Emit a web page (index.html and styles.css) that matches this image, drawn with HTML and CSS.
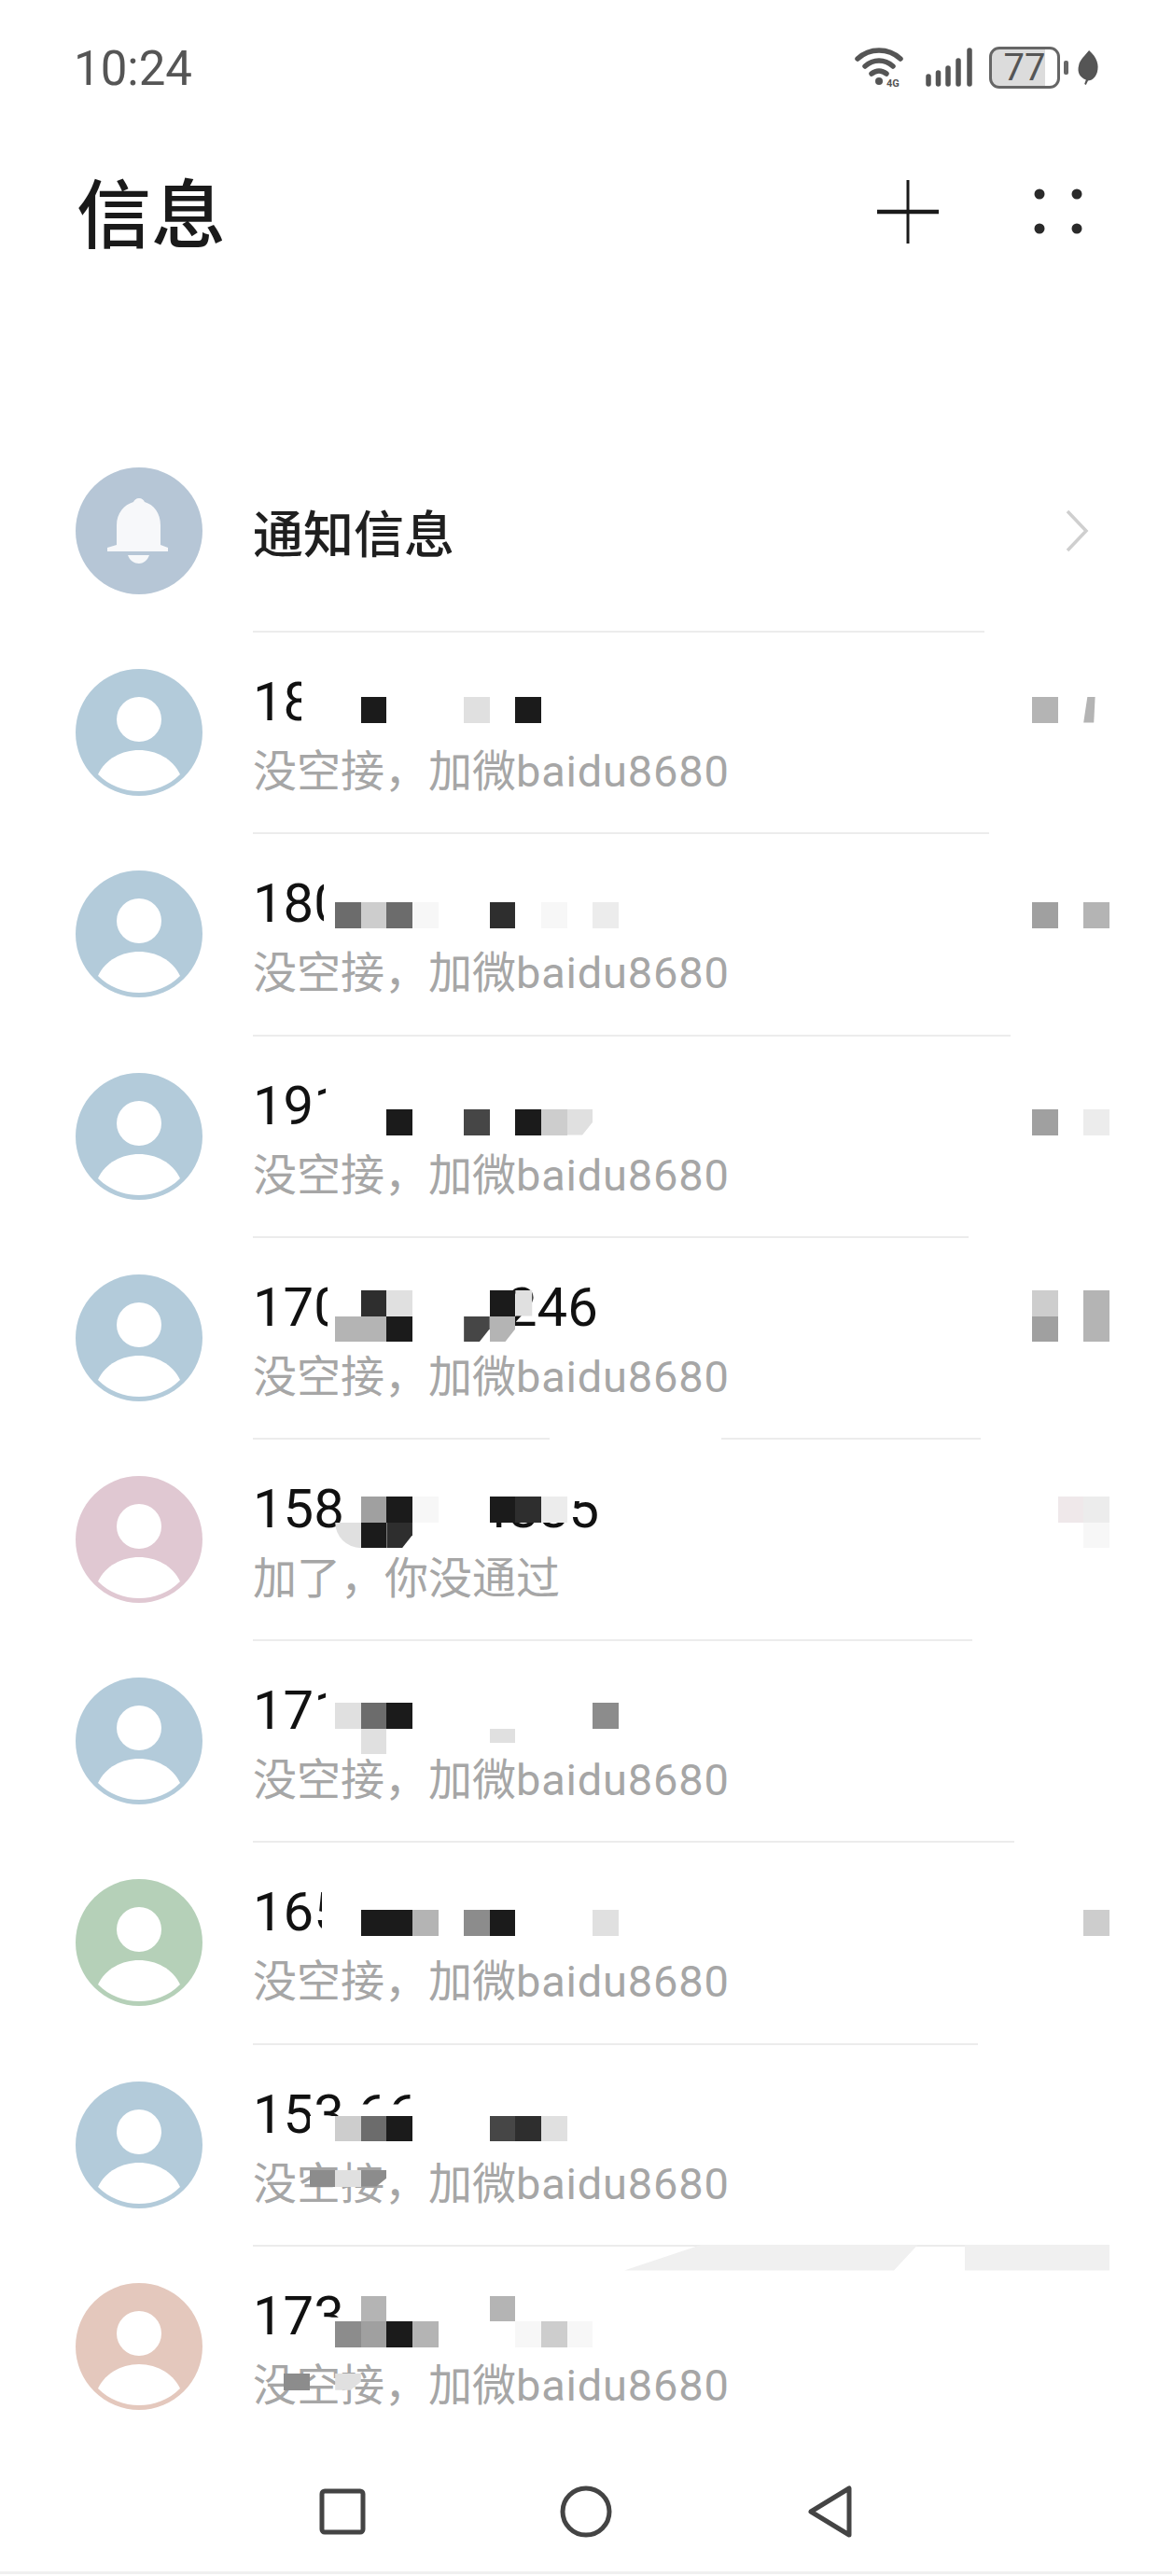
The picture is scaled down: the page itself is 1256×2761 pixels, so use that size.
FILE: index.html
```html
<!DOCTYPE html>
<html lang="zh-CN">
<head>
    <meta charset="UTF-8">
    <meta name="viewport" content="width=device-width, initial-scale=1.0">
    <title>信息</title>
    <link rel="stylesheet" href="styles.css">
</head>
<body>
    <svg class="defs" width="0" height="0">
        <symbol id="person" viewBox="0 0 136 136">
            <circle cx="68" cy="54" r="24" fill="#fff"/>
            <path d="M24 113C32 96 50 87 68 87C86 87 104 96 112 113C100 125 84 131 68 131C52 131 36 125 24 113Z" fill="#fff"/>
        </symbol>
    </svg>

    <div class="status-bar">
        <span class="time">10:24</span>
        <div class="status-icons">
            <svg class="icon-wifi" width="54" height="44" viewBox="0 0 54 44" fill="none" stroke="#555" stroke-width="5.500" stroke-linecap="round">
                <path d="M3 13C16 1 36 1 49 13"/>
                <path d="M11 21C20 13 32 13 41 21"/>
                <path d="M18 29C23 25 29 25 34 29"/>
                <circle cx="26" cy="37" r="4" fill="#555" stroke="none"/>
                <text x="34" y="43" class="wifi-label">4G</text>
            </svg>
            <svg class="icon-signal" width="52" height="42" viewBox="0 0 52 42" stroke="#555" stroke-width="5.500" stroke-linecap="round">
                <path d="M3 31V39M13.500 27V39M24 22V39M35 14V39M47 3V39"/>
            </svg>
            <div class="battery"><span>77</span></div>
            <svg class="icon-leaf" width="24" height="38" viewBox="0 0 22 34" preserveAspectRatio="none">
                <path d="M12 1C20 8 22 15 20 22C18 28 14 30 11 30L9 34L7.500 33L9 29C3 27 0 22 2 15C3 10 8 6 12 1Z" fill="#555"/>
            </svg>
        </div>
    </div>

    <div class="title-bar">
        <h1>信息</h1>
        <div class="title-actions">
            <svg width="72" height="72" viewBox="0 0 72 72">
                <path d="M36 2V70" stroke="#1a1a1a" stroke-width="3"/>
                <path d="M3 36H69" stroke="#1a1a1a" stroke-width="4.500"/>
            </svg>
            <svg width="60" height="60" viewBox="0 0 60 60" fill="#2a2a2a">
                <circle cx="10" cy="11" r="5.500"/>
                <circle cx="50" cy="11" r="5.500"/>
                <circle cx="10" cy="48" r="5.500"/>
                <circle cx="50" cy="48" r="5.500"/>
            </svg>
        </div>
    </div>

    <ul class="message-list">
        <li class="row row-notice">
            <div class="row-main">
                <div class="avatar avatar-bell">
                    <svg width="136" height="136" viewBox="0 0 136 136" fill="#f7f8fa">
                        <path d="M68 33C71 33 73 35 74 37C84 40 91 49 91 62V83L99 86V90H34V86L44 83V62C44 49 52 40 62 37C63 35 65 33 68 33Z"/>
                        <path d="M56 94H79C77 100 72 103 68 103C63 103 58 100 56 94Z"/>
                    </svg>
                </div>
                <div class="row-text">
                    <div class="notice-name">通知信息</div>
                </div>
                <svg class="chevron" width="26" height="46" viewBox="0 0 26 46" fill="none" stroke="#cfcfcf" stroke-width="3.500">
                    <path d="M3 2L23 23L3 44"/>
                </svg>
            </div>
            <div class="sep"></div>
        </li>

        <li class="row row-1">
            <div class="row-main">
                <div class="avatar avatar-blue"><svg width="136" height="136"><use href="#person"/></svg></div>
                <div class="row-text">
                    <div class="name"><span class="num">188</span></div>
                    <div class="sub">没空接，加微<span class="latin">baidu8680</span></div>
                </div>
            </div>
            <div class="mosaic"><i></i><i></i><i class="g1"></i><i></i><i></i><i></i><i class="g9"></i><i></i><i class="g1"></i></div>
            <div class="mosaic mosaic-right"><i class="g7"></i><i></i><i class="g7 sliver"></i></div>
            <div class="sep"></div>
        </li>

        <li class="row row-2">
            <div class="row-main">
                <div class="avatar avatar-blue"><svg width="136" height="136"><use href="#person"/></svg></div>
                <div class="row-text">
                    <div class="name"><span class="num">180</span></div>
                    <div class="sub">没空接，加微<span class="latin">baidu8680</span></div>
                </div>
            </div>
            <div class="mosaic"><i></i><i class="g4"></i><i class="g8"></i><i class="g4"></i><i class="g11"></i><i></i><i></i><i class="g2"></i><i></i><i class="g11"></i><i></i><i class="g10"></i></div>
            <div class="mosaic mosaic-right"><i class="g6"></i><i></i><i class="g7"></i></div>
            <div class="sep"></div>
        </li>

        <li class="row row-3">
            <div class="row-main">
                <div class="avatar avatar-blue"><svg width="136" height="136"><use href="#person"/></svg></div>
                <div class="row-text">
                    <div class="name"><span class="num">191</span></div>
                    <div class="sub">没空接，加微<span class="latin">baidu8680</span></div>
                </div>
            </div>
            <div class="mosaic"><i></i><i></i><i></i><i class="g1"></i><i></i><i></i><i class="g3"></i><i></i><i class="g1"></i><i class="g8"></i><i class="g9 corner"></i></div>
            <div class="mosaic mosaic-right"><i class="g6"></i><i></i><i class="g10"></i></div>
            <div class="sep"></div>
        </li>

        <li class="row row-4">
            <div class="row-main">
                <div class="avatar avatar-blue"><svg width="136" height="136"><use href="#person"/></svg></div>
                <div class="row-text">
                    <div class="name"><span class="num">170</span><span class="tail">246</span></div>
                    <div class="sub">没空接，加微<span class="latin">baidu8680</span></div>
                </div>
            </div>
            <div class="mosaic">
                <i></i><i></i><i class="g2"></i><i class="g9"></i><i></i><i></i><i></i><i class="g1"></i><i class="g9 half"></i><i></i><i></i><i></i>
                <i></i><i class="g7"></i><i class="g7"></i><i class="g1"></i><i></i><i></i><i class="g3 corner"></i><i class="g7 corner"></i>
            </div>
            <div class="mosaic mosaic-right">
                <i class="g8"></i><i></i><i class="g7"></i>
                <i class="g6"></i><i></i><i class="g7"></i>
            </div>
            <div class="sep sep-broken"></div>
        </li>

        <li class="row row-5">
            <div class="row-main">
                <div class="avatar avatar-pink"><svg width="136" height="136"><use href="#person"/></svg></div>
                <div class="row-text">
                    <div class="name"><span class="num">158</span><span class="tail">4885</span></div>
                    <div class="sub">加了，你没通过</div>
                </div>
            </div>
            <div class="mosaic">
                <i></i><i></i><i class="g6"></i><i class="g1"></i><i class="g11"></i><i></i><i></i><i class="g1"></i><i class="g2"></i><i class="g10"></i><i></i><i></i>
                <i></i><i class="g9 round"></i><i class="g1"></i><i class="g2 corner"></i>
            </div>
            <div class="mosaic mosaic-right">
                <i></i><i class="g-pink"></i><i class="g10"></i>
                <i></i><i></i><i class="g11"></i>
            </div>
            <div class="sep"></div>
        </li>

        <li class="row row-6">
            <div class="row-main">
                <div class="avatar avatar-blue"><svg width="136" height="136"><use href="#person"/></svg></div>
                <div class="row-text">
                    <div class="name"><span class="num">171</span></div>
                    <div class="sub">没空接，加微<span class="latin">baidu8680</span></div>
                </div>
            </div>
            <div class="mosaic">
                <i></i><i class="g9"></i><i class="g4"></i><i class="g1"></i><i></i><i></i><i></i><i></i><i></i><i></i><i></i><i class="g5"></i>
                <i></i><i></i><i class="g9"></i><i></i><i></i><i></i><i></i><i class="g9 half-top"></i>
            </div>
            <div class="sep"></div>
        </li>

        <li class="row row-7">
            <div class="row-main">
                <div class="avatar avatar-green"><svg width="136" height="136"><use href="#person"/></svg></div>
                <div class="row-text">
                    <div class="name"><span class="num">165</span></div>
                    <div class="sub">没空接，加微<span class="latin">baidu8680</span></div>
                </div>
            </div>
            <div class="mosaic"><i></i><i></i><i class="g1"></i><i class="g1"></i><i class="g7"></i><i></i><i class="g5"></i><i class="g1"></i><i></i><i></i><i></i><i class="g9"></i></div>
            <div class="mosaic mosaic-right"><i></i><i></i><i class="g8"></i></div>
            <div class="sep"></div>
        </li>

        <li class="row row-8">
            <div class="row-main">
                <div class="avatar avatar-blue"><svg width="136" height="136"><use href="#person"/></svg></div>
                <div class="row-text">
                    <div class="name"><span class="num">153</span><span class="tail">66</span></div>
                    <div class="sub">没空接，加微<span class="latin">baidu8680</span></div>
                </div>
            </div>
            <div class="mosaic"><i class="blank"></i><i class="g8"></i><i class="g4"></i><i class="g1"></i><i></i><i></i><i></i><i class="g3"></i><i class="g2"></i><i class="g9"></i></div>
            <div class="mosaic mosaic-sub"><i class="g5"></i><i class="g9"></i><i class="g5 corner"></i></div>
            <div class="sep"></div>
            <div class="smear"></div>
        </li>

        <li class="row row-9">
            <div class="row-main">
                <div class="avatar avatar-peach"><svg width="136" height="136"><use href="#person"/></svg></div>
                <div class="row-text">
                    <div class="name"><span class="num">17</span><span class="tail">3</span></div>
                    <div class="sub">没空接，加微<span class="latin">baidu8680</span></div>
                </div>
            </div>
            <div class="mosaic">
                <i></i><i></i><i class="g7"></i><i></i><i></i><i></i><i></i><i class="g7"></i><i></i><i></i><i></i><i></i>
                <i class="blank"></i><i class="g5"></i><i class="g6"></i><i class="g1"></i><i class="g7"></i><i></i><i></i><i></i><i class="g11"></i><i class="g8"></i><i class="g11"></i>
            </div>
            <div class="mosaic mosaic-sub"><i class="g5"></i><i></i><i class="g9 corner"></i></div>
        </li>
    </ul>

    <div class="nav-bar">
        <svg width="60" height="60" viewBox="0 0 60 60" fill="none" stroke="#444" stroke-width="5">
            <rect x="8" y="8" width="44" height="44" rx="3"/>
        </svg>
        <svg width="60" height="60" viewBox="0 0 60 60" fill="none" stroke="#444" stroke-width="5">
            <circle cx="30" cy="30" r="25"/>
        </svg>
        <svg width="60" height="60" viewBox="0 0 60 60" fill="none" stroke="#444" stroke-width="5" stroke-linejoin="round">
            <path d="M51 5V55L10 30Z"/>
        </svg>
    </div>
</body>
</html>
```

FILE: styles.css
```css
body {
    font-family: Roboto, 'Noto Sans CJK SC', sans-serif;
    margin: 0;
    padding: 0;
    background-color: #fff;
    height: 2761px;
    overflow: hidden;
}

.defs {
    position: absolute;
}

.status-bar {
    display: flex;
    justify-content: space-between;
    align-items: center;
    height: 144px;
    padding: 0 78px 0 79px;
}

.time {
    margin-top: 3px;
    font-size: 51px;
    color: #555;
}

.status-icons {
    display: flex;
    align-items: center;
}

.icon-wifi {
    margin-right: 22px;
}

.wifi-label {
    font-size: 11px;
    font-weight: 700;
    fill: #555;
    stroke: none;
}

.icon-signal {
    margin-right: 16px;
}

.icon-leaf {
    margin-left: 10px;
}

.battery {
    position: relative;
    box-sizing: border-box;
    width: 76px;
    height: 45px;
    margin-right: 8px;
    border: 3px solid #666;
    border-radius: 11px;
    background: linear-gradient(to right, #dcdcdc 82%, #fff 82%);
    color: #555;
    font-size: 40px;
    line-height: 39px;
    text-align: center;
}

.battery::after {
    content: '';
    position: absolute;
    right: -12px;
    top: 12px;
    width: 5px;
    height: 15px;
    border-radius: 2px;
    background-color: #666;
}

.title-bar {
    display: flex;
    justify-content: space-between;
    align-items: center;
    height: 166px;
    padding: 0 92px 0 82px;
}

.title-bar h1 {
    margin: -6px 0 0;
    font-size: 80px;
    font-weight: 500;
    color: #1a1a1a;
}

.title-actions {
    display: flex;
    align-items: center;
    gap: 95px;
}

.message-list {
    list-style: none;
    margin: 152px 0 0;
    padding: 0;
}

.row {
    position: relative;
}

.row-main {
    display: flex;
    align-items: center;
    gap: 54px;
    height: 214.2px;
    padding-left: 81px;
}

.avatar {
    flex-shrink: 0;
    width: 136px;
    height: 136px;
    border-radius: 50%;
}

.avatar svg {
    display: block;
}

.avatar-bell { background-color: #b6c6d6; }
.avatar-blue { background-color: #b3cbda; }
.avatar-pink { background-color: #e0c8d2; }
.avatar-green { background-color: #b5d0b8; }
.avatar-peach { background-color: #e4c8bd; }

.row-text {
    flex: 1;
}

.notice-name {
    font-size: 54px;
    font-weight: 500;
    color: #1f1f1f;
}

.name {
    display: flex;
    height: 72px;
    margin-top: 9px;
    font-size: 58px;
    line-height: 72px;
    color: #111;
}

.num {
    flex-shrink: 0;
    overflow: hidden;
    white-space: pre;
}

.sub {
    margin-top: 3px;
    font-size: 47px;
    line-height: 72px;
    color: #a6a6a6;
}

.latin {
    letter-spacing: 0.8px;
}

.chevron {
    margin-right: 89px;
}

.sep {
    height: 2px;
    margin-left: 271px;
    background-color: #ececec;
}

.row-notice .sep { width: 784px; }
.row-1 .sep { width: 789px; }
.row-2 .sep { width: 812px; }
.row-3 .sep { width: 767px; }
.row-4 .sep { width: 780px; }
.row-5 .sep { width: 771px; }
.row-6 .sep { width: 816px; }
.row-7 .sep { width: 777px; }
.row-8 .sep { width: 850px; }

.sep-broken {
    background: linear-gradient(to right, #ececec 318px, #fff 318px, #fff 502px, #ececec 502px);
}

.smear {
    position: absolute;
    left: 669px;
    top: 214px;
    width: 520px;
    height: 28px;
    background-color: #f0f0f0;
    clip-path: polygon(0 100%, 84px 0, 315px 0, 289px 100%, 365px 100%, 365px 0, 520px 0, 520px 100%);
}

/* censor blocks over the numbers, all on one 27.6px grid */
.mosaic {
    position: absolute;
    left: 331.6px;
    display: grid;
    grid-template-columns: repeat(12, 27.6px);
    grid-auto-rows: 27.6px;
}

.mosaic-right {
    left: 1106px;
    grid-template-columns: repeat(3, 27.6px);
}

.mosaic-sub {
    grid-auto-rows: 18px;
}

.row-1 .mosaic { top: 68.8px; }
.row-2 .mosaic { top: 72.6px; }
.row-3 .mosaic { top: 78.4px; }
.row-4 .mosaic { top: 56.2px; }
.row-5 .mosaic { top: 61px; }
.row-6 .mosaic { top: 65.8px; }
.row-7 .mosaic { top: 71.6px; }
.row-8 .mosaic { top: 76.4px; }
.row-9 .mosaic { top: 53.2px; }
.row-8 .mosaic-sub { top: 134px; }
.row-9 .mosaic-sub { top: 136px; left: 304px; }

/* how much of each number is left uncovered */
.row-1 .num { width: 52px; }
.row-2 .num { width: 76px; }
.row-3 .num { width: 78px; }
.row-4 .num { width: 80px; }
.row-6 .num { width: 78px; }
.row-7 .num { width: 74px; }

.row-4 .tail { margin-left: 192px; }
.row-5 .tail {
    margin-left: 143px;
    clip-path: inset(28px 0 0 18px);
}
.row-8 .tail {
    margin-left: 14px;
    clip-path: inset(0 0 46px 0);
}
.row-9 .tail {
    clip-path: inset(0 0 34px 0);
}

.g1 { background-color: #1b1b1b; }
.g2 { background-color: #2e2e2e; }
.g3 { background-color: #464646; }
.g4 { background-color: #6c6c6c; }
.g5 { background-color: #8c8c8c; }
.g6 { background-color: #a0a0a0; }
.g7 { background-color: #b4b4b4; }
.g8 { background-color: #cdcdcd; }
.g9 { background-color: #e0e0e0; }
.g10 { background-color: #ececec; }
.g11 { background-color: #f7f7f7; }
.g-pink { background-color: #efe8ea; }
.blank { background-color: #fff; }

.sliver { clip-path: polygon(15% 0, 45% 0, 40% 100%, 0 100%); }
.half { clip-path: polygon(0 0, 65% 0, 65% 100%, 0 100%); }
.half-top { height: 55%; }
.corner { clip-path: polygon(0 0, 100% 0, 100% 50%, 60% 100%, 0 100%); }
.round { clip-path: ellipse(100% 100% at 100% 0); }

.nav-bar {
    display: flex;
    justify-content: center;
    align-items: center;
    gap: 201px;
    height: 128px;
    padding-top: 6px;
    border-bottom: 3px solid #f0f0f0;
}
```
